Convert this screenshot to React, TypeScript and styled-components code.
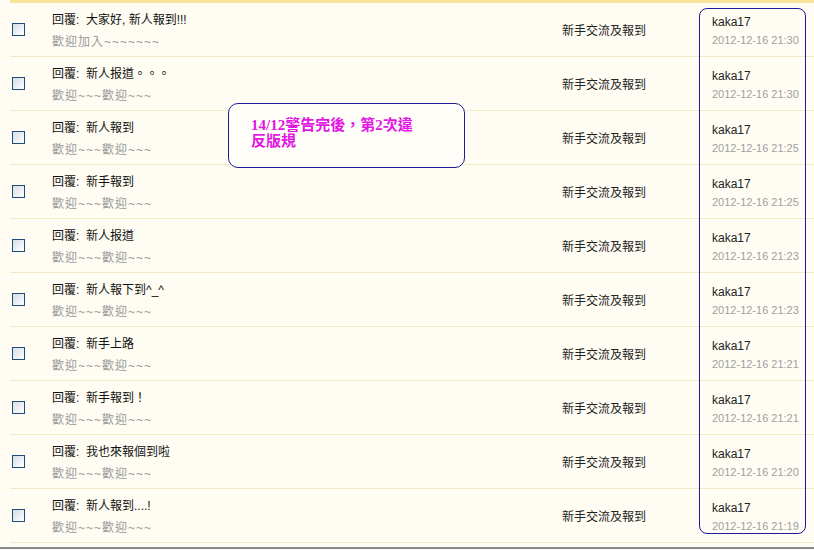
import React from "react";
import styled, { createGlobalStyle } from "styled-components";

const GlobalStyle = createGlobalStyle`
  html, body {
    margin: 0;
    padding: 0;
    background: #fffdf3;
  }
  body {
    font-family: "Liberation Sans", "Noto Sans CJK TC", sans-serif;
  }
`;

interface Post {
  title: string;
  preview: string;
  date: string;
}

const posts: Post[] = [
  { title: "回覆:  大家好, 新人報到!!!", preview: "歡迎加入~~~~~~~", date: "2012-12-16 21:30" },
  { title: "回覆:  新人报道。。。", preview: "歡迎~~~歡迎~~~", date: "2012-12-16 21:30" },
  { title: "回覆:  新人報到", preview: "歡迎~~~歡迎~~~", date: "2012-12-16 21:25" },
  { title: "回覆:  新手報到", preview: "歡迎~~~歡迎~~~", date: "2012-12-16 21:25" },
  { title: "回覆:  新人报道", preview: "歡迎~~~歡迎~~~", date: "2012-12-16 21:23" },
  { title: "回覆:  新人報下到^_^", preview: "歡迎~~~歡迎~~~", date: "2012-12-16 21:23" },
  { title: "回覆:  新手上路", preview: "歡迎~~~歡迎~~~", date: "2012-12-16 21:21" },
  { title: "回覆:  新手報到！", preview: "歡迎~~~歡迎~~~", date: "2012-12-16 21:21" },
  { title: "回覆:  我也來報個到啦", preview: "歡迎~~~歡迎~~~", date: "2012-12-16 21:20" },
  { title: "回覆:  新人報到....!", preview: "歡迎~~~歡迎~~~", date: "2012-12-16 21:19" },
];

const Page = styled.div`
  position: relative;
  width: 814px;
  height: 550px;
  overflow: hidden;
  background: #fffdf3;
`;

const List = styled.div`
  margin-left: 10px;
  border-top: 3px solid #fbe39b;
`;

const Row = styled.div`
  display: grid;
  grid-template-columns: 42px 510px 150px 1fr;
  height: 53px;
  border-bottom: 1px solid #f3eac4;
  align-items: center;
`;

const CheckCell = styled.div`
  padding-left: 2px;
  display: flex;
  align-items: center;
`;

const Checkbox = styled.span`
  display: block;
  width: 11px;
  height: 11px;
  border: 1px solid #1f4d78;
  background: linear-gradient(135deg, #d8dde6 0%, #eef1f5 60%, #ffffff 100%);
`;

const TitleCell = styled.div`
  display: flex;
  flex-direction: column;
  gap: 6px;
  padding-top: 2px;
`;

const Title = styled.span`
  font-size: 12px;
  line-height: 16px;
  color: #111;
  white-space: pre;
`;

const Preview = styled.span`
  font-size: 12px;
  line-height: 16px;
  letter-spacing: 1px;
  color: #9a9a9a;
`;

const Forum = styled.div`
  font-size: 12px;
  color: #222;
`;

const AuthorCell = styled.div`
  display: flex;
  flex-direction: column;
  gap: 3px;
  padding-top: 2px;
`;

const Author = styled.span`
  font-size: 12px;
  line-height: 15px;
  color: #222;
`;

const DateText = styled.span`
  font-size: 11px;
  line-height: 14px;
  color: #a0a0a0;
`;

const Footer = styled.div`
  margin-top: 4px;
  border-top: 2px solid #8a8a8a;
  height: 10px;
  background: #f6f6f6;
`;

const Highlight = styled.div`
  position: absolute;
  left: 699px;
  top: 8px;
  width: 105px;
  height: 524px;
  border: 1.5px solid #1c1c9a;
  border-radius: 8px;
  pointer-events: none;
`;

const Note = styled.div`
  position: absolute;
  left: 228px;
  top: 103px;
  width: 235px;
  height: 63px;
  border: 1.5px solid #1c1c9a;
  border-radius: 10px;
  background: #fffef9;
`;

const NoteText = styled.div`
  margin: 13px 0 0 22px;
  font-family: "Liberation Serif", "Noto Sans CJK TC", serif;
  font-weight: bold;
  font-size: 15px;
  line-height: 16px;
  color: #e316e3;
`;

export default function App() {
  return (
    <Page>
      <GlobalStyle />
      <List>
        {posts.map((p, i) => (
          <Row key={i}>
            <CheckCell>
              <Checkbox />
            </CheckCell>
            <TitleCell>
              <Title>{p.title}</Title>
              <Preview>{p.preview}</Preview>
            </TitleCell>
            <Forum>新手交流及報到</Forum>
            <AuthorCell>
              <Author>kaka17</Author>
              <DateText>{p.date}</DateText>
            </AuthorCell>
          </Row>
        ))}
      </List>
      <Footer />
      <Highlight />
      <Note>
        <NoteText>
          14/12警告完後，第2次違
          <br />
          反版規
        </NoteText>
      </Note>
    </Page>
  );
}
